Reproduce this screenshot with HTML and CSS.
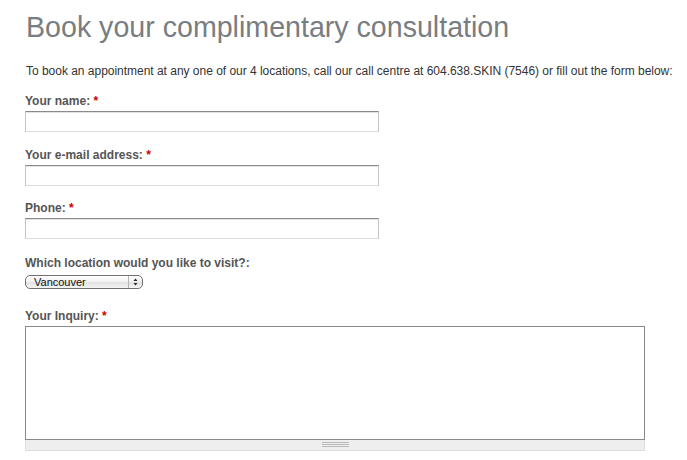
FILE: index.html
```html
<!DOCTYPE html>
<html lang="en">
<head>
<meta charset="utf-8">
<title>Book your complimentary consultation</title>
<link rel="stylesheet" href="styles.css">
</head>
<body>
<div class="page">
  <h1 class="title">Book your complimentary consultation</h1>
  <p class="intro">To book an appointment at any one of our 4 locations, call our call centre at 604.638.SKIN (7546) or fill out the form below:</p>
  <form class="form">
    <div class="form-item">
      <label class="label" for="name">Your name: <span class="req">*</span></label>
      <input class="text" id="name" type="text">
    </div>
    <div class="form-item">
      <label class="label" for="mail">Your e-mail address: <span class="req">*</span></label>
      <input class="text" id="mail" type="text">
    </div>
    <div class="form-item">
      <label class="label" for="phone">Phone: <span class="req">*</span></label>
      <input class="text" id="phone" type="text">
    </div>
    <div class="form-item form-item-select">
      <label class="label" for="loc">Which location would you like to visit?:</label>
      <div class="select-wrap">
        <select class="select" id="loc">
          <option>Vancouver</option>
        </select>
        <svg class="select-arrows" width="14" height="12" viewBox="0 0 14 12">
          <line x1="0.5" y1="0" x2="0.5" y2="12" stroke="#b5b5b5"/>
          <path d="M5.5 5 L7.5 2.5 L9.5 5 Z" fill="#222"/>
          <path d="M5.5 7 L7.5 9.5 L9.5 7 Z" fill="#222"/>
        </svg>
      </div>
    </div>
    <div class="form-item">
      <label class="label" for="inq">Your Inquiry: <span class="req">*</span></label>
      <div class="resizable">
        <textarea class="textarea" id="inq"></textarea>
        <div class="grippie"><span class="grip-lines"></span></div>
      </div>
    </div>
  </form>
</div>
</body>
</html>
```

FILE: styles.css
```css
html, body {
  margin: 0;
  padding: 0;
  background: #fff;
}

.page {
  padding: 9px 0 0 25px;
  font-family: "Liberation Sans", Arial, Helvetica, sans-serif;
}

.title {
  margin: 0;
  font-size: 28.6px;
  line-height: 36px;
  font-weight: normal;
  color: #787d81;
  padding-left: 1px;
}

.intro {
  margin: 18px 0 0 1px;
  font-size: 12px;
  line-height: 16px;
  color: #333;
  letter-spacing: -0.02px;
}

.form {
  margin-top: 13px;
}

.form-item {
  margin-bottom: 13.5px;
}

.form-item-select {
  margin-top: 15px;
  margin-bottom: 18px;
}

.label {
  display: block;
  font-size: 12px;
  line-height: 16px;
  font-weight: bold;
  color: #555;
  padding-top: 1px;
  margin-bottom: 2px;
}

.req {
  color: #c00;
}

.text {
  display: block;
  box-sizing: border-box;
  width: 354px;
  height: 21px;
  margin: 0;
  padding: 2px 3px;
  border: 1px solid;
  border-color: #8a8a8a #c4c4c4 #dcdcdc #c4c4c4;
  box-shadow: inset 0 1px 0 #e2e2e2;
  background: #fff;
  font: 12px "Liberation Sans", Arial, sans-serif;
}

.select-wrap {
  position: relative;
  width: 118px;
  height: 14px;
  margin-top: 4px;
}

.select {
  appearance: none;
  -webkit-appearance: none;
  box-sizing: border-box;
  display: block;
  width: 118px;
  height: 14px;
  margin: 0;
  padding: 0 0 0 8px;
  border: 1px solid #6f6f6f;
  border-radius: 5px;
  background: linear-gradient(#ffffff, #f1f1f1 50%, #e2e2e2 51%, #f4f4f4);
  font: 11px/12px "Liberation Sans", Arial, sans-serif;
  color: #111;
}

.select-arrows {
  position: absolute;
  right: 1px;
  top: 1px;
  pointer-events: none;
}

.resizable {
  width: 620px;
}

.textarea {
  display: block;
  box-sizing: border-box;
  width: 620px;
  height: 114px;
  margin: 0;
  border: 1px solid #8a8a8a;
  resize: none;
  background: #fff;
}

.grippie {
  box-sizing: border-box;
  height: 11px;
  background: #eee;
  border: 1px solid #ddd;
  border-top: 0;
  padding-top: 2px;
}

.grip-lines {
  display: block;
  width: 27px;
  height: 5px;
  margin: 0 auto;
  background: repeating-linear-gradient(#b9b9b9 0 1px, transparent 1px 2px);
}
```
